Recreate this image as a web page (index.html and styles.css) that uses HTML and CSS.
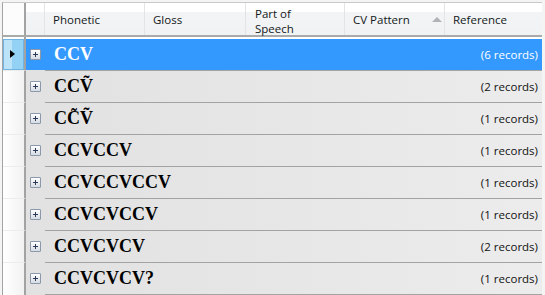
FILE: index.html
```html
<!DOCTYPE html>
<html>
<head>
  <link rel="stylesheet" href="styles.css">
</head>
<body>
  <div class="grid">
    <div class="header">
      <div class="hcorner"></div>
      <div class="hexp"></div>
      <div class="hcol w-phon">Phonetic</div>
      <div class="hcol w-gloss">Gloss</div>
      <div class="hcol w-pos two-line">Part of<br>Speech</div>
      <div class="hcol w-cv">CV Pattern<span class="sort-arrow"></span></div>
      <div class="hcol w-ref">Reference</div>
    </div>
    <div class="spacer"></div>

    <div class="rows">
      <div class="row selected">
        <div class="row-head"><span class="current"></span></div>
        <div class="expander"><span class="plus-box"></span></div>
        <div class="cells">
          <span class="group-name">CCV</span>
          <span class="count">(6 records)</span>
        </div>
      </div>
      <div class="row">
        <div class="row-head"></div>
        <div class="expander"><span class="plus-box"></span></div>
        <div class="cells">
          <span class="group-name">CCṼ</span>
          <span class="count">(2 records)</span>
        </div>
      </div>
      <div class="row">
        <div class="row-head"></div>
        <div class="expander"><span class="plus-box"></span></div>
        <div class="cells">
          <span class="group-name">CC̃Ṽ</span>
          <span class="count">(1 records)</span>
        </div>
      </div>
      <div class="row">
        <div class="row-head"></div>
        <div class="expander"><span class="plus-box"></span></div>
        <div class="cells">
          <span class="group-name">CCVCCV</span>
          <span class="count">(1 records)</span>
        </div>
      </div>
      <div class="row">
        <div class="row-head"></div>
        <div class="expander"><span class="plus-box"></span></div>
        <div class="cells">
          <span class="group-name">CCVCCVCCV</span>
          <span class="count">(1 records)</span>
        </div>
      </div>
      <div class="row">
        <div class="row-head"></div>
        <div class="expander"><span class="plus-box"></span></div>
        <div class="cells">
          <span class="group-name">CCVCVCCV</span>
          <span class="count">(1 records)</span>
        </div>
      </div>
      <div class="row">
        <div class="row-head"></div>
        <div class="expander"><span class="plus-box"></span></div>
        <div class="cells">
          <span class="group-name">CCVCVCV</span>
          <span class="count">(2 records)</span>
        </div>
      </div>
      <div class="row last">
        <div class="row-head"></div>
        <div class="expander"><span class="plus-box"></span></div>
        <div class="cells">
          <span class="group-name">CCVCVCV?</span>
          <span class="count">(1 records)</span>
        </div>
      </div>
    </div>
  </div>
</body>
</html>
```

FILE: styles.css
```css
body {
  margin: 0;
  padding: 0;
  width: 545px;
  height: 295px;
  overflow: hidden;
  background-color: #f4f4f4;
  font-family: "Open Sans", "Noto Sans", sans-serif;
}

.grid {
  margin: 2px 0 0 2px;
  width: 539px;
  border-top: 1px solid #c9c9c9;
  border-left: 1px solid #a3a3a3;
  background-color: #fff;
}

/* column header */
.header {
  display: flex;
  height: 32px;
  border-bottom: 2px solid #aaaaaa;
  background: linear-gradient(#ffffff 0, #ffffff 9px, #f3f4f6 9px, #f1f2f4 100%);
}

.hcorner {
  width: 21px;
  border-right: 2px solid #a3a3a3;
  background-color: #fcfcfc;
}

.hexp {
  width: 18px;
}

.hcol {
  box-sizing: border-box;
  position: relative;
  border-left: 1px solid #e2e4e7;
  padding: 0 0 0 8px;
  font-size: 11.5px;
  color: #111820;
  line-height: 33px;
}

.two-line {
  line-height: 15px;
  padding-top: 3px;
  padding-left: 9px;
}

.w-phon { width: 100px; }
.w-gloss { width: 101px; }
.w-pos { width: 99px; }
.w-cv { width: 100px; }
.w-ref { width: 97px; }

.sort-arrow {
  position: absolute;
  left: 87px;
  top: 14px;
  width: 0;
  height: 0;
  border-left: 5px solid transparent;
  border-right: 5px solid transparent;
  border-bottom: 5px solid #b0b3b8;
}

.spacer {
  display: flex;
  height: 2px;
}

.spacer::before {
  content: "";
  width: 21px;
  border-right: 2px solid #a3a3a3;
}

/* group rows */
.row {
  display: flex;
  height: 32px;
  background: linear-gradient(to right, #e1e1e1, #ececec);
}

.row:first-child {
  height: 31px;
}

.row-head {
  box-sizing: border-box;
  width: 23px;
  border-right: 2px solid #a3a3a3;
  border-top: 1px solid #ececec;
  background: linear-gradient(to right, #ffffff, #f2f2f2);
}

.expander {
  width: 19px;
  display: flex;
  align-items: center;
  justify-content: flex-end;
}

.plus-box {
  box-sizing: border-box;
  position: relative;
  width: 11px;
  height: 11px;
  margin-right: 4px;
  border: 1px solid #8d99ab;
  border-radius: 1px;
  background: linear-gradient(#ffffff, #d5dbe4);
}

.plus-box::before,
.plus-box::after {
  content: "";
  position: absolute;
  background-color: #2c3c58;
}

.plus-box::before {
  left: 2px;
  top: 4px;
  width: 5px;
  height: 1px;
}

.plus-box::after {
  left: 4px;
  top: 2px;
  width: 1px;
  height: 5px;
}

.cells {
  flex: 1;
  display: flex;
  justify-content: space-between;
  align-items: center;
  padding: 0 4px 0 9px;
  border-top: 1px solid #a3a3a3;
}

.row:first-child .cells {
  border-top: none;
}

.row.last .cells {
  border-bottom: 1px solid #a3a3a3;
}

.row.last {
  height: 33px;
}

.group-name {
  font-family: "Liberation Serif", "DejaVu Serif", serif;
  font-weight: bold;
  font-size: 18px;
  line-height: 31px;
  color: #000;
}

.count {
  font-size: 11.5px;
  color: #111;
}

/* selected row */
.row.selected {
  background: #3399ff;
}

.row.selected .group-name,
.row.selected .count {
  color: #fff;
}

.row.selected .row-head {
  position: relative;
  border-top: none;
  box-shadow: inset 0 0 0 1px #6fb4e3;
  background: linear-gradient(to right, #bde3f9 0, #bde3f9 9px, #93d1f5 9px, #93d1f5 100%);
}

.current {
  position: absolute;
  left: 7px;
  top: 11px;
  width: 0;
  height: 0;
  border-top: 4.5px solid transparent;
  border-bottom: 4.5px solid transparent;
  border-left: 5px solid #000;
}
```
